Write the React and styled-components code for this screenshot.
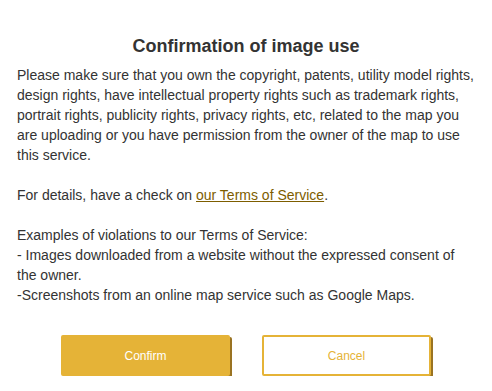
import React from "react";
import styled, { createGlobalStyle } from "styled-components";

const Global = createGlobalStyle`
  html, body { margin: 0; padding: 0; background: #fff; }
  body { font-family: "Liberation Sans", Arial, sans-serif; color: #333; }
`;

const Dialog = styled.div`
  width: 492px;
  box-sizing: border-box;
  padding: 35px 17px 0 17px;
`;

const Title = styled.h1`
  margin: 0 0 8px 0;
  font-size: 18px;
  line-height: 22px;
  font-weight: bold;
  text-align: center;
  color: #333;
`;

const Body = styled.div`
  font-size: 14px;
  line-height: 20px;
  color: #333;
`;

const Para = styled.p`
  margin: 0 0 20px 0;
  &:last-child { margin-bottom: 0; }
`;

const Link = styled.a`
  color: #7d5d00;
  text-decoration: underline;
`;

const Actions = styled.div`
  display: flex;
  justify-content: center;
  gap: 32px;
  margin-top: 30px;
`;

const Button = styled.button`
  width: 169px;
  height: 41px;
  box-sizing: border-box;
  border-radius: 2px;
  font-family: "Liberation Sans", Arial, sans-serif;
  font-size: 12px;
  cursor: pointer;
  box-shadow: 2px 2px 0 #9a7322;
  border: 2px solid #e5b337;
  background: ${(p) => (p.$primary ? "#e5b337" : "#fff")};
  color: ${(p) => (p.$primary ? "#fff" : "#e5b337")};
`;

export default function App() {
  return (
    <>
      <Global />
      <Dialog>
        <Title>Confirmation of image use</Title>
        <Body>
          <Para>
            Please make sure that you own the copyright, patents, utility model rights,
            design rights, have intellectual property rights such as trademark rights,
            portrait rights, publicity rights, privacy rights, etc, related to the map you
            are uploading or you have permission from the owner of the map to use
            this service.
          </Para>
          <Para>
            For details, have a check on <Link href="#">our Terms of Service</Link>.
          </Para>
          <Para>
            Examples of violations to our Terms of Service:
            <br />- Images downloaded from a website without the expressed consent of
            the owner.
            <br />-Screenshots from an online map service such as Google Maps.
          </Para>
        </Body>
        <Actions>
          <Button $primary>Confirm</Button>
          <Button>Cancel</Button>
        </Actions>
      </Dialog>
    </>
  );
}
